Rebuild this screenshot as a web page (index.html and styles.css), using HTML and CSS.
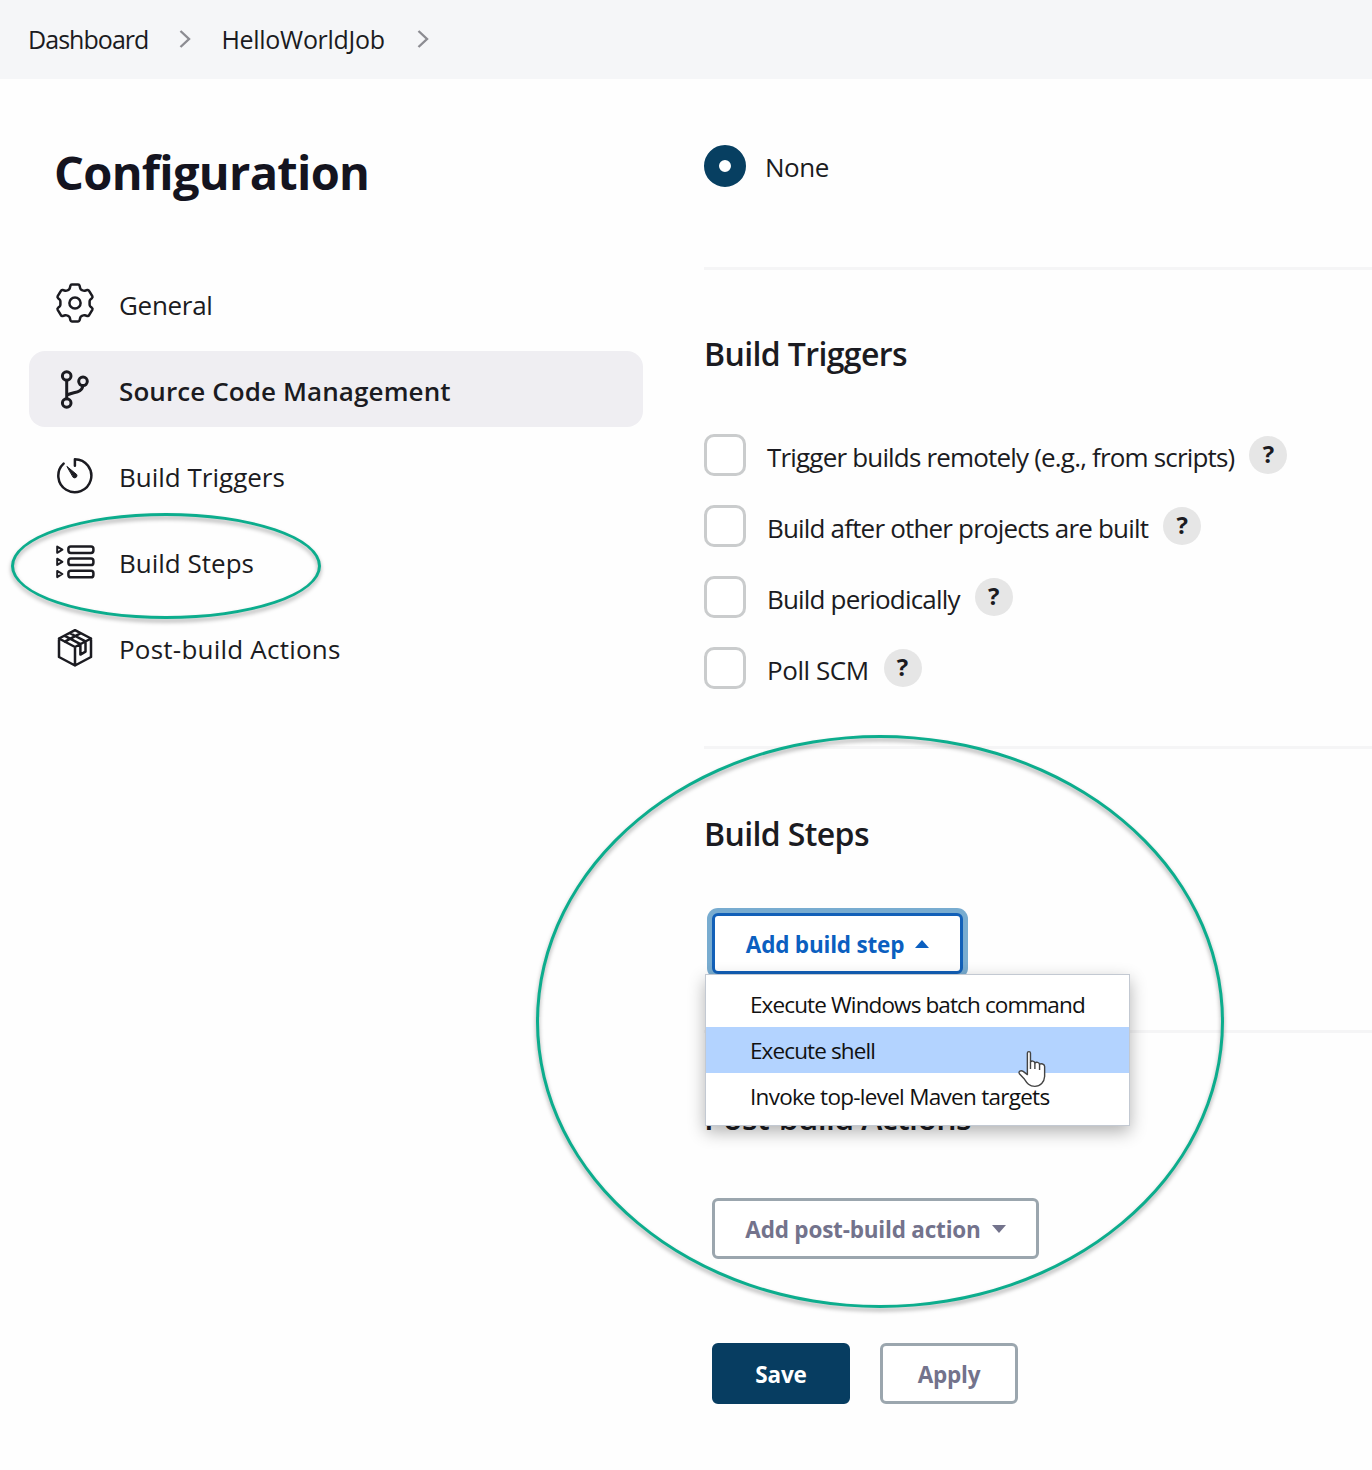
FILE: index.html
```html
<!DOCTYPE html>
<html lang="en">
<head>
<meta charset="utf-8">
<title>HelloWorldJob Config</title>
<link rel="stylesheet" href="styles.css">
</head>
<body>
<header class="breadcrumbs">
  <a class="crumb crumb-root"><span>Dashboard</span></a>
  <svg class="chevron" viewBox="0 0 12 20"><path d="M1.5 2 10 10 1.5 18"/></svg>
  <a class="crumb crumb-job"><span>HelloWorldJob</span></a>
  <svg class="chevron" viewBox="0 0 12 20"><path d="M1.5 2 10 10 1.5 18"/></svg>
</header>
<div class="page">
  <aside class="sidebar">
    <h1 class="title"><span>Configuration</span></h1>
    <nav class="nav">
      <a class="nav-item nav-general">
        <svg class="icon" viewBox="0 0 40 40"><path d="M16.9 1.600H23.100Q24.300 1.600 24.600 2.800L25.200 5.200Q25.500 6.300 26.500 6.800L27.800 7.500Q28.800 8 29.800 7.700L32.300 7Q33.500 6.700 34.100 7.800L37.300 13.200Q37.900 14.300 37 15.100L35.300 16.700Q34.600 17.400 34.600 18.400V21.600Q34.600 22.600 35.300 23.300L37 24.900Q37.900 25.700 37.300 26.800L34.100 32.200Q33.500 33.300 32.300 33L29.800 32.300Q28.800 32 27.800 32.500L26.500 33.200Q25.500 33.700 25.200 34.800L24.600 37.200Q24.300 38.400 23.100 38.400H16.900Q15.700 38.400 15.400 37.200L14.800 34.800Q14.500 33.700 13.500 33.200L12.200 32.500Q11.200 32 10.200 32.300L7.700 33Q6.500 33.300 5.900 32.200L2.700 26.800Q2.100 25.700 3 24.900L4.700 23.300Q5.400 22.600 5.400 21.600V18.400Q5.400 17.400 4.700 16.700L3 15.100Q2.100 14.300 2.700 13.200L5.900 7.800Q6.500 6.700 7.700 7L10.200 7.700Q11.200 8 12.200 7.500L13.500 6.800Q14.500 6.300 14.800 5.200L15.400 2.800Q15.700 1.600 16.900 1.600Z"/><circle cx="20" cy="20" r="5.600"/></svg>
        <span>General</span>
      </a>
      <a class="nav-item nav-item-active">
        <svg class="icon icon-bold" viewBox="0 0 40 40"><circle cx="11.7" cy="7" r="4.300"/><circle cx="11.7" cy="34" r="4.300"/><circle cx="28" cy="12.3" r="4.300"/><path d="M11.7 11.300V29.700M27.8 16.600C27 24.5 18 22.500 11.7 26.200"/></svg>
        <span>Source Code Management</span>
      </a>
      <a class="nav-item">
        <svg class="icon" viewBox="0 0 40 40"><path d="M19.9 10.8V4.2A16.5 16.5 0 1 1 8.6 8.6"/><path class="fill" d="M12.2 11.7 21.6 19.4A2.3 2.3 0 0 1 18.5 22.6Z"/></svg>
        <span>Build Triggers</span>
      </a>
      <a class="nav-item">
        <svg class="icon" viewBox="0 0 40 40"><rect x="13.4" y="5.4" width="25" height="6.6" rx="2.4"/><rect x="13.4" y="17.5" width="25" height="6.6" rx="2.4"/><rect x="13.4" y="29.7" width="25" height="6.6" rx="2.4"/><path class="thin" d="M2.2 5.6 7.4 8.7 2.2 11.8ZM2.2 17.7 7.4 20.8 2.2 23.9ZM2.2 29.9 7.4 33 2.2 36.1Z"/></svg>
        <span>Build Steps</span>
      </a>
      <a class="nav-item nav-post">
        <svg class="icon" viewBox="0 0 40 40"><path d="M20 3.2 36 11.5V30L20 38.5 4 30V11.5ZM4 11.5 20 20 36 11.5M20 20V38.5M9.4 8.7 25.4 17.2V27.6L30.5 24.6V14.4L14.6 6M9.800 14.600 25.8 6.200"/></svg>
        <span>Post-build Actions</span>
      </a>
    </nav>
  </aside>
  <main class="content">
    <section class="section section-scm">
      <label class="choice choice-none"><i class="radio"></i><span>None</span></label>
    </section>
    <section class="section section-triggers">
      <h2 class="heading"><span>Build Triggers</span></h2>
      <div class="choices">
        <label class="choice"><i class="checkbox"></i><span>Trigger builds remotely (e.g., from scripts)</span><b class="help">?</b></label>
        <label class="choice"><i class="checkbox"></i><span>Build after other projects are built</span><b class="help">?</b></label>
        <label class="choice"><i class="checkbox"></i><span>Build periodically</span><b class="help">?</b></label>
        <label class="choice choice-scm"><i class="checkbox"></i><span>Poll SCM</span><b class="help">?</b></label>
      </div>
    </section>
    <section class="section section-steps">
      <h2 class="heading"><span>Build Steps</span></h2>
      <div class="dropdown">
        <button class="button button-focus"><span>Add build step</span><svg class="caret" viewBox="0 0 14 8"><path d="M0 8 7 0 14 8Z"/></svg></button>
        <div class="menu">
          <div class="menu-item"><span>Execute Windows batch command</span></div>
          <div class="menu-item menu-item-hover"><span>Execute shell</span></div>
          <div class="menu-item menu-item-maven"><span>Invoke top-level Maven targets</span></div>
        </div>
      </div>
    </section>
    <section class="section section-post">
      <h2 class="heading"><span>Post-build Actions</span></h2>
      <button class="button button-post"><span>Add post-build action</span><svg class="caret" viewBox="0 0 14 8"><path d="M0 0H14L7 8Z"/></svg></button>
    </section>
    <div class="actions">
      <button class="button button-primary"><span>Save</span></button>
      <button class="button button-apply"><span>Apply</span></button>
    </div>
  </main>
</div>
<svg class="cursor" viewBox="0 0 32 40"><path d="M10 3C10 1 13.300 1 13.300 3V12.500C14 11 17.600 11.300 18 13.500 19.500 12.200 22.800 12.800 23 15 24.500 13.800 28.400 14.600 28.400 17.300V28C28 34 24 38.500 18 38.500 12 38.500 9.500 35 7 31L1.500 25C0 22.500 3 21 5.500 22.500L10 26Z"/><path d="M13.300 12.500V20M18 13.500V20M23 15V21"/></svg>
<div class="marker marker-nav"></div>
<div class="marker marker-steps"></div>
</body>
</html>
```
FILE: styles.css
```css
* { box-sizing: border-box; }
body {
  margin: 0;
  height: 1470px;
  overflow: hidden;
  position: relative;
  background: #fefefe;
  color: #1b1b21;
  font: 400 26px/36px "Open Sans", "Noto Sans", sans-serif;
}
h1, h2 { margin: 0; }
svg { display: block; flex: none; fill: none; }
span { white-space: nowrap; }

.breadcrumbs { height: 79px; display: flex; align-items: center; padding: 0 0 1px 28px; background: #f5f6f8; font-size: 25px; }
.chevron { width: 12px; height: 20px; stroke: #8c8c92; stroke-width: 2.4; }
.crumb-root { margin-right: 31px; letter-spacing: -0.95px; }
.crumb-job { margin: 0 32px 0 30px; letter-spacing: -0.3px; }

.page { display: flex; }
.sidebar { width: 704px; padding: 63px 61px 0 29px; }
.title { padding-left: 25px; font-size: 47px; line-height: 60px; font-weight: 700; letter-spacing: -0.7px; color: #14141f; }
.nav { display: flex; flex-direction: column; gap: 10px; margin-top: 63px; }
.nav-item { height: 76px; display: flex; align-items: center; gap: 24px; padding-left: 26px; border-radius: 16px; }
.nav-item span { padding-top: 3px; }
.nav-item-active { background: #efeef2; font-weight: 600; letter-spacing: 0.1px; }
.nav-general { letter-spacing: -0.3px; }
.nav-post { letter-spacing: 0.22px; }
.icon { width: 40px; height: 40px; stroke: #1b1b21; stroke-width: 2.5; stroke-linejoin: round; stroke-linecap: round; }
.icon-bold { stroke-width: 3; }
.icon .fill { fill: #1b1b21; stroke-width: 1; }
.icon .thin { stroke-width: 2; }

.content { flex: 1; }
.section { border-bottom: 3px solid #f5f5f6; }
.heading { font-size: 32px; line-height: 44px; font-weight: 600; padding-left: 0; letter-spacing: -0.62px; }
.choice { height: 42px; display: flex; align-items: center; letter-spacing: -0.82px; }
.choice span { margin-left: 21px; padding-top: 3px; }
.choice-none { letter-spacing: -0.5px; }
.choice-none span { margin-left: 19px; padding-top: 2px; }
.choice-scm { letter-spacing: -0.45px; }
.radio { width: 42px; height: 42px; border-radius: 50%; border: 15.500px solid #073f61; background: #fff; }
.checkbox { width: 42px; height: 42px; border: 3px solid #cacccd; border-radius: 10px; background: #fff; }
.help { width: 38px; height: 38px; margin-left: 15px; border-radius: 50%; background: #e6e6e6; font-size: 24px; line-height: 36px; letter-spacing: 0; text-align: center; }
.section-scm { height: 191px; padding-top: 66px; }
.section-triggers { height: 479px; padding-top: 62px; }
.choices { display: flex; flex-direction: column; gap: 29px; margin-top: 58px; }
.section-steps { height: 284px; padding-top: 63px; }
.section-post { border: 0; padding-top: 63px; }

.button { display: flex; align-items: center; justify-content: center; height: 61px; padding: 0; border: 3px solid #9ba6ae; border-radius: 6px; background: #fff; color: #73738c; font: 700 22.5px/30px "Open Sans", "Noto Sans", sans-serif; letter-spacing: -0.2px; }
.button span { padding-top: 3px; }
.caret { width: 14px; height: 8px; fill: currentColor; margin-left: 11px; }
.dropdown { position: relative; margin: 57px 0 0 8px; }
.button-focus { width: 251px; color: #0b5fc0; border-color: #1260b8; box-shadow: 0 0 0 5px #78acd0; }
.button-post { width: 327px; margin: 58px 0 0 8px; }
.menu { position: absolute; left: -7px; top: 61px; width: 425px; height: 152px; padding: 6px 0; border: 1px solid #c3c9d2; background: #fff; box-shadow: 0 6px 16px rgba(0,0,0,.3); color: #111; font-size: 22.5px; letter-spacing: -0.88px; }
.menu-item { height: 46px; line-height: 48px; padding-left: 44px; }
.menu-item-hover { background: #b3d3ff; }
.menu-item-maven { letter-spacing: -0.72px; }
.actions { display: flex; gap: 30px; margin: 84px 0 0 8px; }
.button-primary { width: 138px; background: #073d61; border-color: #073d61; color: #fff; }
.button-apply { width: 138px; }

.cursor { position: absolute; left: 1018px; top: 1049px; width: 30px; height: 40px; fill: #fff; stroke: #444; stroke-width: 1.5; stroke-linejoin: round; }
.marker { position: absolute; border: 3px solid #0cad8d; border-radius: 50%; filter: drop-shadow(0 3px 2px rgba(0,0,0,.35)); }
.marker-nav { left: 11px; top: 513px; width: 310px; height: 106px; }
.marker-steps { left: 536px; top: 735px; width: 688px; height: 573px; }
```
